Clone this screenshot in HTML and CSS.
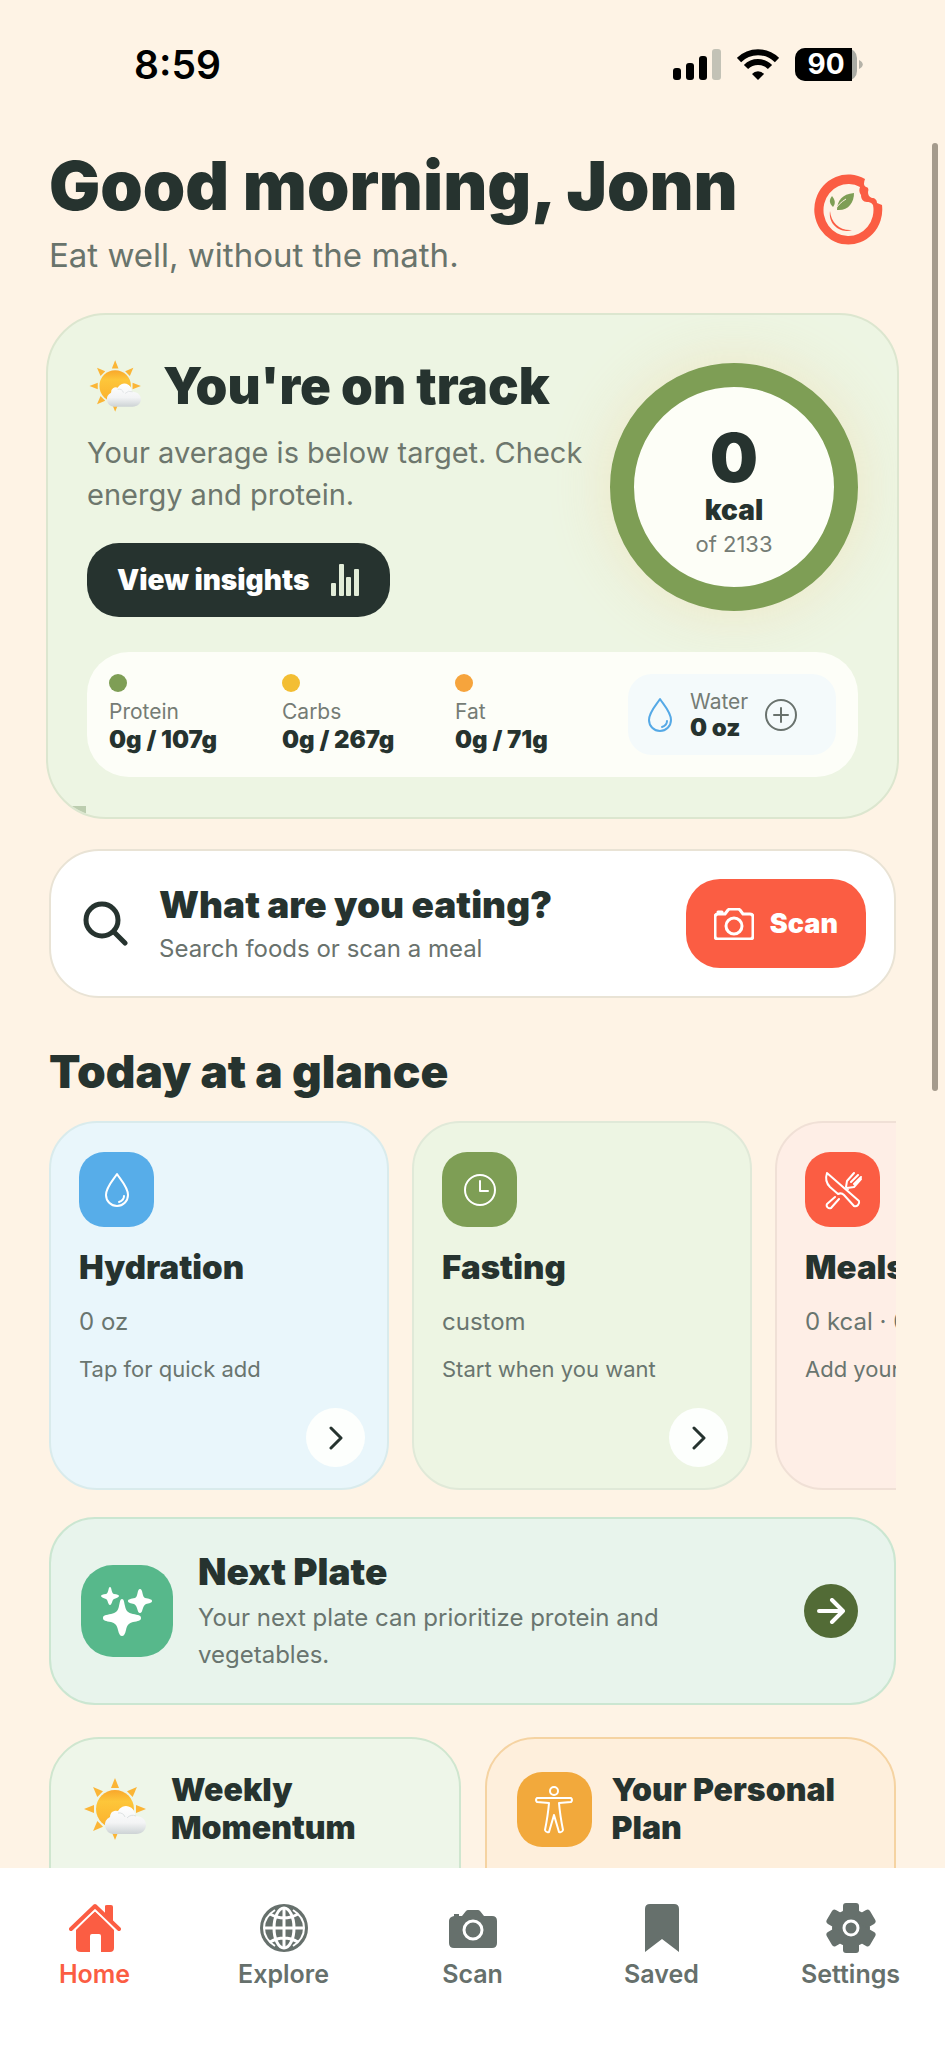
FILE: index.html
```html
<!DOCTYPE html>
<html lang="en">
<head>
    <meta charset="utf-8">
    <meta name="viewport" content="width=device-width, initial-scale=1">
    <title>Home</title>
    <link rel="stylesheet" href="styles.css">
</head>
<body>
    <!-- shared icons -->
    <svg class="defs" aria-hidden="true">
        <defs>
            <linearGradient id="sunFill" x1="0" y1="0" x2="0" y2="1">
                <stop offset="0" stop-color="#f9a72b"/>
                <stop offset="0.3" stop-color="#fdc63a"/>
                <stop offset="1" stop-color="#fbb02d"/>
            </linearGradient>
            <linearGradient id="cloudFill" x1="0" y1="0" x2="0" y2="1">
                <stop offset="0" stop-color="#ffffff"/>
                <stop offset="0.6" stop-color="#f3f4f5"/>
                <stop offset="1" stop-color="#cdd3d5"/>
            </linearGradient>
        </defs>
        <symbol id="sun" viewBox="0 0 70 70">
            <g fill="#fbb536">
                <path id="ray" d="M30 14 34 4l4 10z"/>
                <use href="#ray" transform="rotate(45 34 35)"/>
                <use href="#ray" transform="rotate(90 34 35)"/>
                <use href="#ray" transform="rotate(180 34 35)"/>
                <use href="#ray" transform="rotate(225 34 35)"/>
                <use href="#ray" transform="rotate(270 34 35)"/>
                <use href="#ray" transform="rotate(315 34 35)"/>
            </g>
            <circle cx="34" cy="35" r="19" fill="url(#sunFill)"/>
            <path d="M32 60a9 9 0 0 1-3-17 6 6 0 0 1 8-6 9 9 0 0 1 17 5c6 0 11 3 11 9 0 5-4 9-10 9z" fill="url(#cloudFill)"/>
            <path d="M37 39a6 6 0 0 1 7 4M46 44a8 8 0 0 1 9-2" fill="none" stroke="#dde1e3"/>
        </symbol>
        <symbol id="drop" viewBox="0 0 26 36">
            <path d="M13 2C10 7 2 15 2 23a11 11 0 0 0 22 0C24 15 16 7 13 2z"/>
            <path d="M20 24c0 3-2 5-5 6"/>
        </symbol>
        <symbol id="chevron" viewBox="0 0 14 24">
            <path d="M2 2l10 10L2 22"/>
        </symbol>
    </svg>

    <div class="app">
        <div class="statusbar">
            <span class="clock">8:59</span>
            <div class="status-icons">
                <svg width="48" height="32" viewBox="0 0 48 32">
                    <rect x="0" y="19" width="8" height="12" rx="3"/>
                    <rect x="13" y="14" width="8" height="17" rx="3"/>
                    <rect x="26" y="7" width="8" height="24" rx="3"/>
                    <rect x="39" y="0" width="9" height="31" rx="3" fill="#c3c2b6"/>
                </svg>
                <svg width="42" height="32" viewBox="0 0 42 32">
                    <path d="M2 11a27 27 0 0 1 38 0M9 18a17 17 0 0 1 24 0" fill="none" stroke="#000" stroke-width="6"/>
                    <path d="M21 31l-6-6a8 8 0 0 1 12 0z"/>
                </svg>
                <svg width="68" height="33" viewBox="0 0 68 33" class="battery">
                    <rect width="62" height="33" rx="10" fill="#a9aaa3"/>
                    <path d="M10 0h47v33H10A10 10 0 0 1 0 23V10A10 10 0 0 1 10 0z"/>
                    <path d="M64 12c5 2 5 7 0 9z" fill="#b5b2a8"/>
                    <text x="31" y="26" text-anchor="middle">90</text>
                </svg>
            </div>
        </div>

        <main class="content">
            <header class="header">
                <div>
                    <h1>Good morning, Jonn</h1>
                    <p class="tagline">Eat well, without the math.</p>
                </div>
                <svg class="logo" width="94" height="94" viewBox="0 0 94 94">
                    <path fill-rule="evenodd" fill="#fb5d43" d="M63 15A34 35 0 1 0 80 41L75 39C75 36 73 34 70 34 67 33 66 31 66 28 67 25 66 23 64 23 61 21 62 18 63 15zM58 23A25 26 0 1 0 71 41C69 38 67 38 65 38 61 38 59 35 59 31 57 28 57 26 58 23z"/>
                    <path d="M35 46c0-9 5-16 17-17 0 10-6 18-17 17z" fill="#7e9e55"/>
                    <path d="M33 46c2-4 6-8 11-11" fill="none" stroke="#fef3e5" stroke-width="1"/>
                    <path d="M31 43c-4-4-4-7-1-11 3 4 4 7 1 11z" fill="#7e9e55"/>
                    <path d="M28 47c1 12 10 20 22 19-12 4-24-6-22-19z" fill="#fb5d43"/>
                </svg>
            </header>

            <section class="hero">
                <div class="hero-top">
                    <div class="hero-text">
                        <h2 class="hero-title">
                            <svg width="58" height="58"><use href="#sun"/></svg>
                            You're on track
                        </h2>
                        <p>Your average is below target. Check energy and protein.</p>
                        <button class="insights">
                            View insights
                            <svg width="28" height="32" viewBox="0 0 28 32">
                                <rect x="0" y="19" width="5" height="13" rx="1"/>
                                <rect x="8" y="0" width="5" height="32" rx="1"/>
                                <rect x="15" y="13" width="5" height="19" rx="1"/>
                                <rect x="23" y="5" width="5" height="27" rx="1"/>
                            </svg>
                        </button>
                    </div>
                    <div class="ring">
                        <span class="ring-value">0</span>
                        <span class="ring-unit">kcal</span>
                        <span class="ring-goal">of 2133</span>
                    </div>
                </div>
                <div class="macros">
                    <div class="macro">
                        <i class="dot protein"></i>
                        <span>Protein</span>
                        <b>0g / 107g</b>
                    </div>
                    <div class="macro">
                        <i class="dot carbs"></i>
                        <span>Carbs</span>
                        <b>0g / 267g</b>
                    </div>
                    <div class="macro">
                        <i class="dot fat"></i>
                        <span>Fat</span>
                        <b>0g / 71g</b>
                    </div>
                    <div class="water">
                        <svg class="line-icon" width="26" height="36"><use href="#drop"/></svg>
                        <div class="macro">
                            <span>Water</span>
                            <b>0 oz</b>
                        </div>
                        <button class="add" aria-label="Add water">
                            <svg class="line-icon" width="32" height="32" viewBox="0 0 32 32">
                                <circle cx="16" cy="16" r="15"/>
                                <path d="M16 9v14M9 16h14"/>
                            </svg>
                        </button>
                    </div>
                </div>
            </section>

            <section class="search">
                <svg width="46" height="46" viewBox="0 0 46 46">
                    <circle cx="20" cy="19" r="16" fill="none" stroke="#26332f" stroke-width="5"/>
                    <path d="M32 31l11 11" stroke="#26332f" stroke-width="5" stroke-linecap="round"/>
                </svg>
                <a class="search-link" href="#search">
                    <strong>What are you eating?</strong>
                    <span>Search foods or scan a meal</span>
                </a>
                <button class="scan">
                    <svg class="line-icon" width="40" height="32" viewBox="0 0 40 32">
                        <path d="M4 6h7l3-4q1-1 2-1h8q1 0 2 1l3 4h7q3 0 3 3v19q0 3-3 3H4q-3 0-3-3V9q0-3 3-3zM4 6V4h4v2"/>
                        <circle cx="20" cy="18" r="8"/>
                    </svg>
                    Scan
                </button>
            </section>

            <h2 class="section-title">Today at a glance</h2>
            <div class="glance">
                <article class="tile tile-blue">
                    <div class="badge blue">
                        <svg class="line-icon" width="26" height="36"><use href="#drop"/></svg>
                    </div>
                    <h3>Hydration</h3>
                    <p class="amount">0 oz</p>
                    <p class="hint">Tap for quick add</p>
                    <button class="go" aria-label="Open hydration"><svg class="line-icon" width="14" height="24"><use href="#chevron"/></svg></button>
                </article>
                <article class="tile tile-green">
                    <div class="badge green">
                        <svg class="line-icon" width="34" height="34" viewBox="0 0 34 34">
                            <circle cx="17" cy="17" r="15"/>
                            <path d="M17 8v10h8"/>
                        </svg>
                    </div>
                    <h3>Fasting</h3>
                    <p class="amount">custom</p>
                    <p class="hint">Start when you want</p>
                    <button class="go" aria-label="Open fasting"><svg class="line-icon" width="14" height="24"><use href="#chevron"/></svg></button>
                </article>
                <article class="tile tile-red">
                    <div class="badge red">
                        <svg class="line-icon" width="40" height="40" viewBox="0 0 40 40">
                            <path d="M4 3c-2 6-1 10 3 14l8 7c2-1 4-1 6 1l10 11a4 4 0 0 0 5-5z"/>
                            <path d="M12 27l-8 7a3 3 0 0 0 4 4l8-9M23 17l1-6 7-8M28 12l7-7M31 14l7-7M24 18l7-1 7-8M23 17l2 2"/>
                        </svg>
                    </div>
                    <h3>Meals</h3>
                    <p class="amount">0 kcal · 0 logged</p>
                    <p class="hint">Add your first meal</p>
                    <button class="go" aria-label="Open meals"><svg class="line-icon" width="14" height="24"><use href="#chevron"/></svg></button>
                </article>
            </div>

            <section class="next">
                <div class="next-icon">
                    <svg width="52" height="52" viewBox="0 0 52 52" fill="#fff">
                        <path d="M21 14c2 0 2 3 3 7 1 5 3 7 8 8 5 1 8 1 8 4s-3 3-8 4c-4 1-6 3-7 8-1 4-2 6-4 6s-3-2-4-6c-1-5-3-7-7-8-5-1-8-1-8-4s3-3 8-4c5-1 7-3 8-8 1-4 1-7 3-7z"/>
                        <path d="M9 2c2 0 1 6 4 7 3 0 5 1 5 2s-2 2-5 3c-2 1-2 6-4 6s-2-5-4-6c-3-1-5-2-5-3s2-2 5-2c3-1 2-7 4-7z"/>
                        <path d="M39 4c3 0 2 8 5 9 4 1 7 1 7 3s-3 2-6 3c-4 2-3 9-6 9s-2-7-6-9c-3-1-6-1-6-3s3-2 7-3c3-1 2-9 5-9z"/>
                    </svg>
                </div>
                <div class="next-text">
                    <h3>Next Plate</h3>
                    <p>Your next plate can prioritize protein and vegetables.</p>
                </div>
                <button class="next-go" aria-label="Open next plate">
                    <svg class="line-icon" width="28" height="26" viewBox="0 0 28 26"><path d="M2 13h24M15 2l11 11-11 11"/></svg>
                </button>
            </section>

            <div class="plans">
                <section class="plan plan-green">
                    <svg width="70" height="70"><use href="#sun"/></svg>
                    <h3>Weekly Momentum</h3>
                </section>
                <section class="plan plan-orange">
                    <div class="badge orange">
                        <svg class="line-icon" width="40" height="50" viewBox="0 0 40 50">
                            <circle cx="20" cy="7" r="4"/>
                            <path d="M3 14h34q2 2 0 4l-12 1q1 12 4 27-1 3-4 2l-5-17-5 17q-3 1-4-2 3-15 4-27L3 18q-2-2 0-4z"/>
                        </svg>
                    </div>
                    <h3>Your Personal Plan</h3>
                </section>
            </div>
        </main>

        <nav class="tabbar">
            <a class="active" href="#home">
                <svg width="52" height="50" viewBox="0 0 52 50">
                    <path d="M7 27 26 8l19 19v18q0 4-4 4h-9V33q0-2-2-2h-7q-2 0-2 2v16h-9q-5 0-5-4z" fill="currentColor"/>
                    <path d="M2 25 26 3l24 22" fill="none" stroke="#fff" stroke-width="8"/>
                    <path d="M36 3q0-1 2-1h4q2 0 2 2v15l-8-8z" fill="currentColor"/>
                    <path d="M2 26 26 3l24 23" fill="none" stroke="currentColor" stroke-width="4" stroke-linecap="round" stroke-linejoin="round"/>
                </svg>
                Home
            </a>
            <a href="#explore">
                <svg width="50" height="50" viewBox="0 0 50 50">
                    <circle cx="25" cy="25" r="24" fill="currentColor"/>
                    <g fill="none" stroke="#fff" stroke-width="3">
                        <ellipse cx="25" cy="25" rx="10" ry="20"/>
                        <path d="M25 5v40M5 25h40M11 11q14 8 28 0M11 39q14-8 28 0"/>
                        <path d="M16 7Q5 14 5 25t11 18M34 7q11 7 11 18T34 43" stroke-width="2"/>
                    </g>
                </svg>
                Explore
            </a>
            <a href="#scan">
                <svg width="50" height="50" viewBox="0 0 50 50">
                    <path d="M6 13v-2h5v2h3l4-5q1-1 2-1h10q1 0 2 1l4 5h8q5 0 5 5v22q0 5-5 5H6q-5 0-5-5V18q0-4 5-5z" fill="currentColor"/>
                    <circle cx="25" cy="27" r="9" fill="none" stroke="#fff" stroke-width="3"/>
                </svg>
                Scan
            </a>
            <a href="#saved">
                <svg width="50" height="50" viewBox="0 0 50 50">
                    <path d="M13 1h24q5 0 5 5v43L25 36 8 49V6q0-5 5-5z" fill="currentColor"/>
                </svg>
                Saved
            </a>
            <a href="#settings">
                <svg width="50" height="50" viewBox="0 0 50 50">
                    <g fill="currentColor">
                        <circle cx="25" cy="25" r="19"/>
                        <rect x="17" y="0" width="16" height="50" rx="3"/>
                        <rect x="17" y="0" width="16" height="50" rx="3" transform="rotate(60 25 25)"/>
                        <rect x="17" y="0" width="16" height="50" rx="3" transform="rotate(120 25 25)"/>
                    </g>
                    <circle cx="25" cy="25" r="7" fill="none" stroke="#fff" stroke-width="3"/>
                </svg>
                Settings
            </a>
        </nav>
        <div class="scrollbar"></div>
    </div>
</body>
</html>
```
FILE: styles.css
```css
*{
    box-sizing: border-box;
}
body{
    margin: 0;
    background-color: #fef3e5;
    color: #26332f;
    font-family: Inter, "Liberation Sans", sans-serif;
}
h1, h2, h3, p{
    margin: 0;
}
h1, h2, h3{
    font-weight: 900;
}
button{
    display: flex;
    align-items: center;
    justify-content: center;
    padding: 0;
    border: 0;
    font-family: inherit;
    cursor: pointer;
}
a{
    color: inherit;
    text-decoration: none;
}
svg{
    flex: none;
    display: block;
}
.defs{
    position: absolute;
    width: 0;
    height: 0;
}
.line-icon{
    fill: none;
    stroke: currentColor;
    stroke-width: 2;
    stroke-linecap: round;
    stroke-linejoin: round;
}

.app{
    position: relative;
    display: flex;
    flex-direction: column;
    height: 100vh;
    overflow: hidden;
}

/* status bar */
.statusbar{
    flex: none;
    display: flex;
    justify-content: space-between;
    align-items: center;
    padding: 40px 82px 40px 134px;
    color: #000;
}
.clock{
    font-size: 39px;
    line-height: 49px;
    font-weight: 600;
}
.status-icons{
    display: flex;
    align-items: center;
    gap: 16px;
}
.battery text{
    fill: #fff;
    font-size: 28px;
    font-weight: 700;
}

.content{
    flex: 1;
    min-height: 0;
    overflow: hidden;
    padding: 16px 49px 0;
}
.header{
    display: flex;
    justify-content: space-between;
    align-items: center;
}
h1{
    font-size: 68px;
    line-height: 80px;
    white-space: nowrap;
}
.tagline{
    margin-top: 8px;
    color: #69746c;
    font-size: 33px;
    line-height: 44px;
}

/* hero */
.hero{
    position: relative;
    margin: 36px -3px 0;
    padding: 41px 39px 40px;
    border: 2px solid #dce6cf;
    border-radius: 60px;
    background-color: #edf5e3;
    overflow: hidden;
}
.hero::before{
    content: "";
    position: absolute;
    left: 0;
    bottom: 0;
    width: 38px;
    height: 11px;
    background-color: #bccdaf;
}
.hero-top{
    display: flex;
    justify-content: space-between;
    align-items: center;
    gap: 20px;
}
.hero-text{
    flex: 1;
}
.hero-title{
    display: flex;
    align-items: center;
    gap: 18px;
    font-size: 51px;
    line-height: 60px;
    white-space: nowrap;
}
.hero-text p{
    margin-top: 16px;
    color: #6d776d;
    font-size: 29px;
    line-height: 42px;
}
.insights{
    gap: 22px;
    height: 74px;
    margin-top: 27px;
    padding: 0 31px 0 30px;
    border-radius: 32px;
    background-color: #26332f;
    color: #fff;
    font-size: 28px;
    font-weight: 900;
}
.insights svg{
    fill: #e2edd8;
}
.ring{
    flex: none;
    display: flex;
    flex-direction: column;
    align-items: center;
    justify-content: center;
    width: 248px;
    height: 248px;
    padding-top: 8px;
    border: 24px solid #7e9e55;
    border-radius: 50%;
    background-color: #fdfef7;
    box-shadow: 0 0 60px rgba(244, 199, 130, 0.32);
}
.ring-value{
    font-size: 68px;
    line-height: 70px;
    font-weight: 900;
}
.ring-unit{
    font-size: 28px;
    line-height: 36px;
    font-weight: 900;
}
.ring-goal{
    color: #757c75;
    font-size: 22px;
    line-height: 32px;
}
.macros{
    position: relative;
    display: grid;
    grid-template-columns: 1fr 1fr 1fr 208px;
    align-items: center;
    margin-top: 35px;
    padding: 22px;
    border-radius: 42px;
    background-color: #fdfef8;
}
.macro{
    display: flex;
    flex-direction: column;
    white-space: nowrap;
}
.macro span{
    color: #757c75;
    font-size: 21px;
    line-height: 26px;
}
.macro b{
    font-size: 24px;
    line-height: 30px;
    font-weight: 900;
}
.dot{
    width: 18px;
    height: 18px;
    margin-bottom: 7px;
    border-radius: 50%;
}
.protein{
    background-color: #7e9e55;
}
.carbs{
    background-color: #f3be33;
}
.fat{
    background-color: #f6a43c;
}
.water{
    display: flex;
    align-items: center;
    gap: 17px;
    height: 81px;
    padding-left: 19px;
    border-radius: 24px;
    background-color: #f4fafb;
    color: #55a9e6;
}
.water b{
    color: #26332f;
    line-height: 26px;
}
.add{
    background: none;
    color: #69726d;
}

/* search */
.search{
    display: flex;
    align-items: center;
    margin-top: 30px;
    padding: 28px;
    padding-left: 31px;
    border: 2px solid #e9e3d5;
    border-radius: 50px;
    background-color: #fff;
}
.search-link{
    flex: 1;
    display: flex;
    flex-direction: column;
    margin-left: 31px;
}
.search-link strong{
    font-size: 37px;
    line-height: 50px;
    font-weight: 900;
}
.search-link span{
    color: #69726d;
    font-size: 24px;
    line-height: 38px;
}
.scan{
    gap: 16px;
    height: 89px;
    padding: 0 28px;
    border-radius: 34px;
    background-color: #fb5d43;
    color: #fff;
    font-size: 27px;
    font-weight: 900;
}
.scan .line-icon{
    stroke-width: 3;
}

/* today at a glance */
.section-title{
    margin-top: 43px;
    font-size: 46px;
    line-height: 60px;
}
.glance{
    display: flex;
    gap: 23px;
    margin-top: 20px;
    overflow: hidden;
}
.tile{
    flex: none;
    display: flex;
    flex-direction: column;
    width: 340px;
    padding: 29px 22px 21px 28px;
    border: 2px solid #e0e9d8;
    border-radius: 48px;
}
.tile-blue{
    background-color: #e9f6fb;
    border-color: #d9ebec;
}
.tile-green{
    background-color: #edf5e3;
}
.tile-red{
    background-color: #feeee6;
    border-color: #f0e0d6;
}
.badge{
    flex: none;
    display: flex;
    align-items: center;
    justify-content: center;
    width: 75px;
    height: 75px;
    border-radius: 25px;
    color: #fff;
}
.blue{
    background-color: #57ade9;
}
.green{
    background-color: #7e9e55;
}
.red{
    background-color: #fb5d43;
}
.orange{
    background-color: #f2a93c;
}
.tile h3{
    margin-top: 20px;
    font-size: 33px;
    line-height: 40px;
}
.amount{
    margin-top: 19px;
    color: #69756f;
    font-size: 24px;
    line-height: 32px;
    white-space: nowrap;
}
.hint{
    margin-top: 16px;
    color: #69756f;
    font-size: 22px;
    line-height: 30px;
    white-space: nowrap;
}
.go{
    align-self: flex-end;
    width: 59px;
    height: 59px;
    margin-top: 24px;
    border-radius: 50%;
    background-color: #fdfffd;
    color: #26332f;
}
.go .line-icon{
    stroke-width: 3;
}

/* next plate */
.next{
    display: flex;
    align-items: center;
    margin-top: 27px;
    padding: 30px 36px 30px 30px;
    border: 2px solid #cbe6d1;
    border-radius: 46px;
    background-color: #e8f4ec;
}
.next-icon{
    display: flex;
    align-items: center;
    justify-content: center;
    width: 92px;
    height: 92px;
    border-radius: 32px;
    background-color: #57b88b;
}
.next-text{
    flex: 1;
    padding: 0 90px 0 25px;
}
.next-text h3{
    font-size: 37px;
    line-height: 46px;
}
.next-text p{
    margin-top: 4px;
    color: #69756f;
    font-size: 24px;
    line-height: 37px;
}
.next-go{
    width: 54px;
    height: 54px;
    border-radius: 50%;
    background-color: #526b36;
    color: #fff;
}
.next-go .line-icon{
    stroke-width: 4;
}

/* bottom cards */
.plans{
    display: grid;
    grid-template-columns: 1fr 1fr;
    gap: 24px;
    margin-top: 32px;
}
.plan{
    display: flex;
    align-items: center;
    gap: 20px;
    padding: 32px 30px 90px;
    border: 2px solid #cfe6cf;
    border-radius: 50px;
}
.plan-green{
    background-color: #eef6e9;
}
.plan-orange{
    border-color: #f5d3a2;
    background-color: #feefdc;
}
.plan h3{
    font-size: 32px;
    line-height: 38px;
}

/* tab bar */
.tabbar{
    flex: none;
    display: grid;
    grid-template-columns: repeat(5, 1fr);
    padding: 35px 0 59px;
    background-color: #fff;
}
.tabbar a{
    display: flex;
    flex-direction: column;
    align-items: center;
    gap: 6px;
    color: #66706c;
    font-size: 25px;
    line-height: 30px;
    font-weight: 600;
}
.tabbar a.active{
    color: #fb5d43;
}

.scrollbar{
    position: absolute;
    top: 143px;
    right: 7px;
    width: 6px;
    height: 948px;
    border-radius: 3px;
    background-color: #a59b8d;
}
```
